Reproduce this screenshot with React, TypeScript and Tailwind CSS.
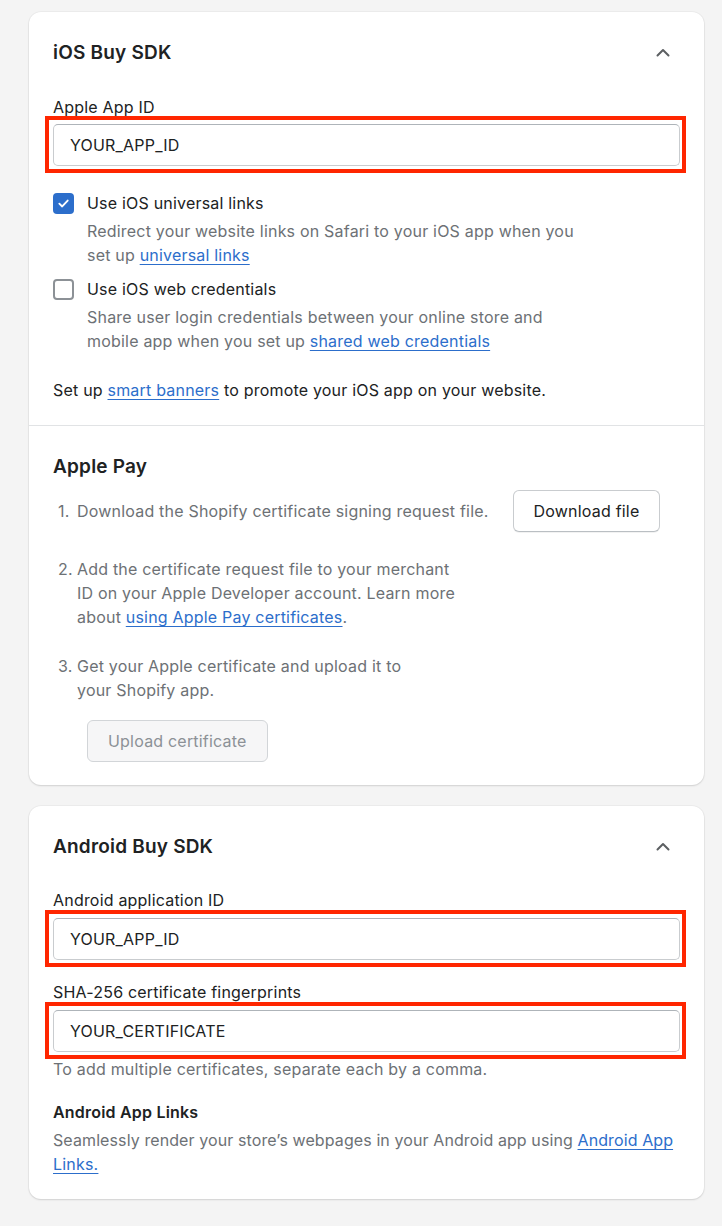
import React from 'react';

const font = { fontFamily: 'Inter, "Noto Sans", sans-serif' };

function Chevron() {
  return (
    <svg width="20" height="20" viewBox="0 0 20 20" fill="none" className="text-[#5c5f62]">
      <path d="M4.5 12.5 10 7l5.5 5.5" stroke="currentColor" strokeWidth="2" strokeLinecap="round" strokeLinejoin="round" />
    </svg>
  );
}

function Link({ children }: { children: React.ReactNode }) {
  return <a className="text-[#2c6ecb] underline underline-offset-[3px] decoration-1">{children}</a>;
}

function Field({ label, value, tight }: { label: string; value: string; tight?: boolean }) {
  return (
    <div>
      <div className="text-[16px] leading-[20px] text-[#202223]">{label}</div>
      <div
        className={
          tight
            ? 'mt-[-1px] ml-[-8px] mr-[-6px] border-4 border-[#ff2600] pl-[4px] pr-[2px] pt-[4px] pb-[3px]'
            : 'ml-[-8px] mr-[-6px] border-4 border-[#ff2600] pl-[4px] pr-[2px] pt-[4px] pb-[3px]'
        }
      >
        <div className="h-[42px] rounded-[5px] border border-[#c9cccf] border-t-[#aeb4b9] bg-white px-4 flex items-center text-[16px] text-[#202223]">
          {value}
        </div>
      </div>
    </div>
  );
}

function Checkbox({ checked }: { checked: boolean }) {
  return checked ? (
    <div className="w-[21px] h-[21px] rounded-[4px] bg-[#2c6ecb] flex items-center justify-center shrink-0">
      <svg width="13" height="13" viewBox="0 0 14 14" fill="none">
        <path d="M2.5 7.2 5.6 10.2 11.5 3.8" stroke="white" strokeWidth="2" strokeLinecap="round" strokeLinejoin="round" />
      </svg>
    </div>
  ) : (
    <div className="w-[21px] h-[21px] rounded-[4px] border-2 border-[#8c9196] bg-white shrink-0" />
  );
}

export default function App() {
  return (
    <div className="min-h-[1226px] bg-[#f4f4f4] px-[29px] pt-[12px] pb-6 text-[#202223] tracking-[0.2px]" style={font}>
      {/* iOS card */}
      <div className="w-[675px] rounded-[12px] bg-white shadow-[0_0_0_1px_rgba(0,0,0,0.03),0_1px_2px_rgba(0,0,0,0.12)]">
        <div className="px-6 pt-[29px] pb-[23px]">
          <div className="flex items-center justify-between h-6">
            <h2 className="text-[19px] leading-6 font-semibold">iOS Buy SDK</h2>
            <span className="mr-[7px]"><Chevron /></span>
          </div>
          <div className="mt-[32px]">
            <Field label="Apple App ID" value="YOUR_APP_ID" tight />
          </div>

          <div className="mt-[18px] flex flex-col gap-[10px]">
            <div>
              <div className="flex items-center gap-[13px] h-6">
                <Checkbox checked />
                <span className="text-[16px] leading-6">Use iOS universal links</span>
              </div>
              <p className="mt-[4px] pl-[34px] text-[16px] leading-6 text-[#6d7175]">
                Redirect your website links on Safari to your iOS app when you
                <br />
                set up <Link>universal links</Link>
              </p>
            </div>
            <div>
              <div className="flex items-center gap-[13px] h-6">
                <Checkbox checked={false} />
                <span className="text-[16px] leading-6">Use iOS web credentials</span>
              </div>
              <p className="mt-[4px] pl-[34px] text-[16px] leading-6 text-[#6d7175]">
                Share user login credentials between your online store and
                <br />
                mobile app when you set up <Link>shared web credentials</Link>
              </p>
            </div>
          </div>

          <p className="mt-[25px] text-[16px] leading-6">
            Set up <Link>smart banners</Link> to promote your iOS app on your website.
          </p>
        </div>

        <div className="border-t border-[#e1e3e5] px-6 pt-[29px] pb-[23px]">
          <h2 className="text-[19px] leading-6 font-semibold">Apple Pay</h2>
          <ol className="mt-[11px] text-[16px] leading-6 text-[#6d7175]">
            <li className="flex items-center">
              <span className="w-[24px] pl-[5px] shrink-0">1.</span>
              <span className="whitespace-nowrap">Download the Shopify certificate signing request file.</span>
              <button className="ml-[24px] h-[42px] px-[20px] rounded-[6px] border border-[#c9cccf] border-b-[#babfc3] bg-white text-[#202223] shadow-[0_1px_0_rgba(0,0,0,0.05)]">
                Download file
              </button>
            </li>
            <li className="flex mt-[25px]">
              <span className="w-[24px] pl-[5px] shrink-0">2.</span>
              <span>
                Add the certificate request file to your merchant
                <br />
                ID on your Apple Developer account. Learn more
                <br />
                about <Link>using Apple Pay certificates</Link>.
              </span>
            </li>
            <li className="flex mt-[25px]">
              <span className="w-[24px] pl-[5px] shrink-0">3.</span>
              <span>
                Get your Apple certificate and upload it to
                <br />
                your Shopify app.
              </span>
            </li>
          </ol>
          <button className="mt-[18px] ml-[34px] h-[42px] px-[20px] rounded-[6px] border border-[#d2d5d8] bg-[#f6f6f7] text-[16px] text-[#8c9196]">
            Upload certificate
          </button>
        </div>
      </div>

      {/* Android card */}
      <div className="mt-[21px] w-[675px] rounded-[12px] bg-white shadow-[0_0_0_1px_rgba(0,0,0,0.03),0_1px_2px_rgba(0,0,0,0.12)] px-6 pt-[29px] pb-[23px]">
        <div className="flex items-center justify-between h-6">
          <h2 className="text-[19px] leading-6 font-semibold">Android Buy SDK</h2>
          <span className="mr-[7px]"><Chevron /></span>
        </div>
        <div className="mt-[31px]">
          <Field label="Android application ID" value="YOUR_APP_ID" />
        </div>
        <div className="mt-[15px]">
          <Field label="SHA-256 certificate fingerprints" value="YOUR_CERTIFICATE" />
        </div>
        <p className="text-[16px] leading-[20px] text-[#6d7175]">
          To add multiple certificates, separate each by a comma.
        </p>
        <h3 className="mt-[21px] text-[16px] leading-6 font-semibold">Android App Links</h3>
        <p className="mt-[4px] text-[16px] leading-6 text-[#6d7175]">
          <span className="whitespace-nowrap tracking-[0.1px]">
            Seamlessly render your store’s webpages in your Android app using <Link>Android App</Link>
          </span>
          <br />
          <Link>Links.</Link>
        </p>
      </div>
    </div>
  );
}
